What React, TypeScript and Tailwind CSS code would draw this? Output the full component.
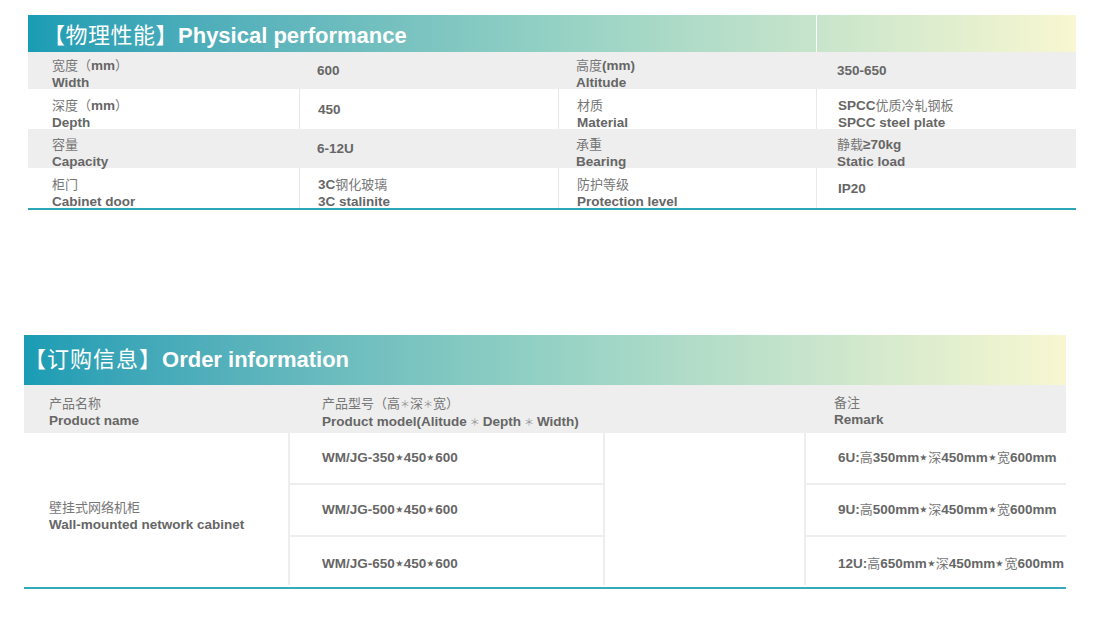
import React from "react";

const CJK = /([\u2E80-\u9FFF\u3000-\u303F\uFF00-\uFFEF]+)/;

// Chinese runs stay regular/lighter, latin runs inherit the bold
function Mixed({ text }: { text: string }) {
  return (
    <>
      {text.split(CJK).map((part, i) =>
        CJK.test(part) ? (
          <span key={i} className="text-[13px] font-normal text-[#777]">
            {part}
          </span>
        ) : (
          <React.Fragment key={i}>{part}</React.Fragment>
        )
      )}
    </>
  );
}

type Row = { gray: boolean; h: string; cells: string[][] };

const physical: Row[] = [
  {
    gray: true,
    h: "h-[37px]",
    cells: [["宽度（mm）", "Width"], ["600"], ["高度(mm)", "Altitude"], ["350-650"]],
  },
  {
    gray: false,
    h: "h-[40px]",
    cells: [
      ["深度（mm）", "Depth"],
      ["450"],
      ["材质", "Material"],
      ["SPCC优质冷轧钢板", "SPCC steel plate"],
    ],
  },
  {
    gray: true,
    h: "h-[39px]",
    cells: [["容量", "Capacity"], ["6-12U"], ["承重", "Bearing"], ["静载≥70kg", "Static load"]],
  },
  {
    gray: false,
    h: "h-[40px]",
    cells: [
      ["柜门", "Cabinet door"],
      ["3C钢化玻璃", "3C stalinite"],
      ["防护等级", "Protection level"],
      ["IP20"],
    ],
  },
];

const padX = ["pl-[24px]", "pl-[18px]", "pl-[18px]", "pl-[21px]"];

function Cell({ lines, pad, line }: { lines: string[]; pad: string; line: boolean }) {
  return (
    <div
      className={`flex flex-col ${lines.length > 1 ? "justify-end" : "justify-center"} ${pad} ${
        line ? "border-l border-[#e8e8e8]" : ""
      }`}
    >
      <div className={lines.length > 1 ? "translate-y-[2px]" : ""}>
        {lines.map((t, i) => (
          <div key={i} className="leading-[17px]">
            <Mixed text={t} />
          </div>
        ))}
      </div>
    </div>
  );
}

const Star = ({ gap }: { gap?: boolean }) => (
  <span className={`text-[10px] font-normal text-[#999] ${gap ? "mx-[3px]" : ""}`}>＊</span>
);

const models = ["WM/JG-350⋆450⋆600", "WM/JG-500⋆450⋆600", "WM/JG-650⋆450⋆600"];
const remarks = [
  "6U:高350mm⋆深450mm⋆宽600mm",
  "9U:高500mm⋆深450mm⋆宽600mm",
  "12U:高650mm⋆深450mm⋆宽600mm",
];

export default function App() {
  return (
    <div
      className="min-h-screen bg-white pt-[15px] text-[13.5px] font-bold text-[#666]"
      style={{ fontFamily: '"Liberation Sans", "Noto Sans CJK SC", sans-serif' }}
    >
      {/* 物理性能 */}
      <section className="ml-[28px] w-[1048px]">
        <div className="flex h-[37px] bg-gradient-to-r from-[#189cb4] via-[#93d1c4] to-[#f8f7d1]">
          <div className="flex w-[788px] items-center pl-[15px] pt-[5px] text-[22px] leading-none text-white">
            <span className="font-normal tracking-[0.5px]">【物理性能】</span>Physical performance
          </div>
          <div className="w-px bg-white" />
          <div className="flex-1" />
        </div>
        {physical.map((row, r) => (
          <div
            key={r}
            className={`grid grid-cols-[271px_259px_258px_260px] ${row.h} ${
              row.gray ? "bg-[#eeeeee]" : "bg-white"
            }`}
          >
            {row.cells.map((c, i) => (
              <Cell key={i} lines={c} pad={padX[i]} line={!row.gray && i > 0} />
            ))}
          </div>
        ))}
        <div className="h-[2px] bg-[#2ba6b6]" />
      </section>

      {/* 订购信息 */}
      <section className="ml-[24px] mt-[125px] w-[1042px]">
        <div className="flex h-[50px] items-center bg-gradient-to-r from-[#189cb4] via-[#93d1c4] to-[#f8f7d1] text-[22px] leading-none text-white">
          <span className="font-normal tracking-[1px]">【订购信息】</span>Order information
        </div>
        <div className="grid h-[48px] grid-cols-[264px_518px_260px] items-center bg-[#eeeeee] leading-[17px]">
          <div className="pl-[25px] pt-[6px]">
            <div>
              <Mixed text="产品名称" />
            </div>
            <div>Product name</div>
          </div>
          <div className="pl-[34px] pt-[8px]">
            <div>
              <Mixed text="产品型号（高" />
              <Star />
              <Mixed text="深" />
              <Star />
              <Mixed text="宽）" />
            </div>
            <div>
              Product model(Alitude
              <Star gap />
              Depth
              <Star gap />
              Width)
            </div>
          </div>
          <div className="pl-[28px] pt-[4px]">
            <div>
              <Mixed text="备注" />
            </div>
            <div>Remark</div>
          </div>
        </div>
        <div className="grid grid-cols-[264px_315px_203px_260px] grid-rows-[52px_52px_48px]">
          <div className="row-span-3 flex flex-col justify-center pl-[25px] pt-[14px] leading-[17px]">
            <div>
              <Mixed text="壁挂式网络机柜" />
            </div>
            <div>Wall-mounted network cabinet</div>
          </div>
          {[0, 1, 2].map((i) => (
            <React.Fragment key={i}>
              <div
                className={`col-start-2 flex items-center border-l-2 border-[#eeeeee] pl-[32px] ${
                  i < 2 ? "border-b-2" : "pt-[6px]"
                }`}
                style={{ gridRowStart: i + 1 }}
              >
                {models[i]}
              </div>
              <div
                className={`col-start-4 flex items-center border-[#eeeeee] pl-[32px] ${
                  i < 2 ? "border-b-2" : "pt-[6px]"
                }`}
                style={{ gridRowStart: i + 1 }}
              >
                <Mixed text={remarks[i]} />
              </div>
            </React.Fragment>
          ))}
          <div className="col-start-3 row-span-3 row-start-1 border-x-2 border-[#eeeeee]" />
        </div>
        <div className="mt-[2px] h-[2px] bg-[#34a9b7]" />
      </section>
    </div>
  );
}
